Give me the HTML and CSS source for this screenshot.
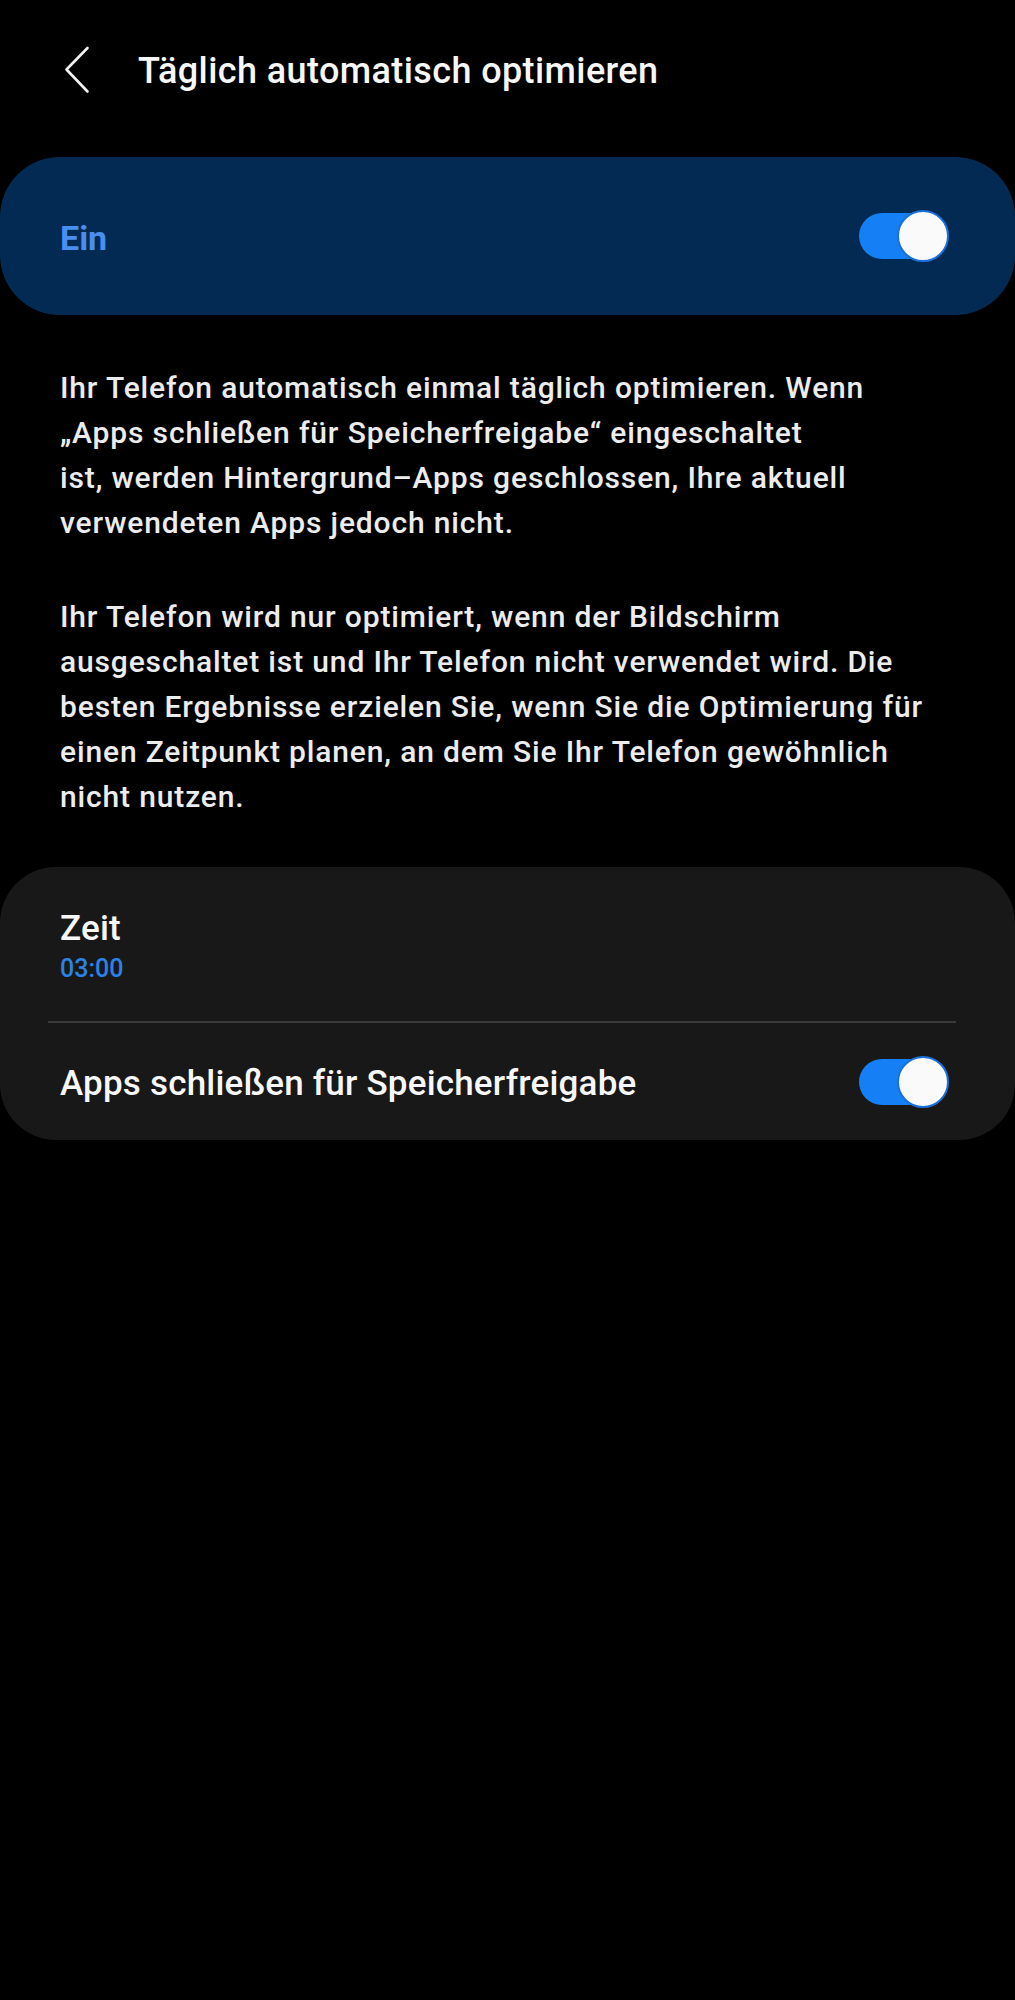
FILE: index.html
```html
<!DOCTYPE html>
<html lang="de">
<head>
<meta charset="utf-8">
<title>Täglich automatisch optimieren</title>
<link rel="stylesheet" href="styles.css">
</head>
<body>
<div class="screen">
  <header class="appbar">
    <svg class="back" width="26" height="48" viewBox="0 0 26 48" aria-hidden="true">
      <path d="M23.5 2 L2.5 23.5 L23.5 45.5" fill="none" stroke="#f2f2f2" stroke-width="2.6" stroke-linecap="round" stroke-linejoin="round"/>
    </svg>
    <h1 class="title">Täglich automatisch optimieren</h1>
  </header>

  <section class="master">
    <span class="master-label">Ein</span>
    <span class="switch" role="switch" aria-checked="true"><span class="track"></span><span class="knob"></span></span>
  </section>

  <div class="desc">
    <p>Ihr Telefon automatisch einmal täglich optimieren. Wenn<br>„Apps schließen für Speicherfreigabe“ eingeschaltet<br>ist, werden Hintergrund–Apps geschlossen, Ihre aktuell<br>verwendeten Apps jedoch nicht.</p>
    <p>Ihr Telefon wird nur optimiert, wenn der Bildschirm<br>ausgeschaltet ist und Ihr Telefon nicht verwendet wird. Die<br>besten Ergebnisse erzielen Sie, wenn Sie die Optimierung für<br>einen Zeitpunkt planen, an dem Sie Ihr Telefon gewöhnlich<br>nicht nutzen.</p>
  </div>

  <section class="card">
    <div class="row row-time">
      <div class="row-title">Zeit</div>
      <div class="row-sub">03:00</div>
    </div>
    <div class="divider"></div>
    <div class="row row-toggle">
      <div class="row-title row-title-toggle">Apps schließen für Speicherfreigabe</div>
      <span class="switch" role="switch" aria-checked="true"><span class="track"></span><span class="knob"></span></span>
    </div>
  </section>
</div>
</body>
</html>
```

FILE: styles.css
```css
html, body {
  margin: 0;
  padding: 0;
  background: #000;
}

body {
  font-family: Roboto, "Noto Sans", "Liberation Sans", sans-serif;
  color: #f5f5f5;
  width: 1015px;
  min-height: 2000px;
}

.screen {
  display: flex;
  flex-direction: column;
}

.appbar {
  height: 142px;
  display: flex;
  align-items: center;
  padding-left: 64px;
  gap: 48px;
}

.back {
  display: block;
  flex: none;
  margin-top: -2px;
}

.title {
  margin: 0;
  font-size: 36px;
  font-weight: 500;
  letter-spacing: 0.4px;
  color: #f7f7f7;
  line-height: 48px;
}

.master {
  margin-top: 15px;
  height: 158px;
  background: #032a52;
  border-radius: 60px;
  display: flex;
  align-items: center;
  justify-content: space-between;
  padding: 0 66px 0 60px;
}

.master-label {
  font-size: 34px;
  font-weight: 700;
  color: #4a8ff0;
  line-height: 42px;
  padding-top: 3px;
}

.switch {
  position: relative;
  display: block;
  width: 90px;
  height: 52px;
  flex: none;
}

.track {
  position: absolute;
  left: 0;
  top: 3px;
  width: 78px;
  height: 46px;
  border-radius: 23px;
  background: #1580f5;
}

.knob {
  position: absolute;
  right: 0;
  top: 0;
  width: 52px;
  height: 52px;
  box-sizing: border-box;
  border-radius: 50%;
  background: #fafafa;
  border: 2.5px solid #1d6fd8;
}

.desc {
  padding: 50px 20px 0 60px;
}

.desc p {
  margin: 0 0 49px;
  font-size: 30px;
  font-weight: 500;
  letter-spacing: 0.85px;
  line-height: 45px;
  color: #ececec;
}

.desc p:last-child {
  margin-bottom: 48px;
}

.card {
  background: #181818;
  border-radius: 56px;
  display: flex;
  flex-direction: column;
}

.row-time {
  padding: 41px 60px 37px;
}

.row-title {
  font-size: 35px;
  font-weight: 500;
  letter-spacing: 0.2px;
  line-height: 42px;
  color: #f7f7f7;
}

.row-title-toggle {
  padding-top: 4px;
}

.row-sub {
  margin-top: 4px;
  font-size: 25px;
  font-weight: 500;
  line-height: 30px;
  color: #2c83e6;
}

.divider {
  height: 2px;
  margin: 0 59px 0 48px;
  background: #3a3a3a;
}

.row-toggle {
  height: 117px;
  display: flex;
  align-items: center;
  justify-content: space-between;
  padding: 0 66px 0 60px;
}
```
